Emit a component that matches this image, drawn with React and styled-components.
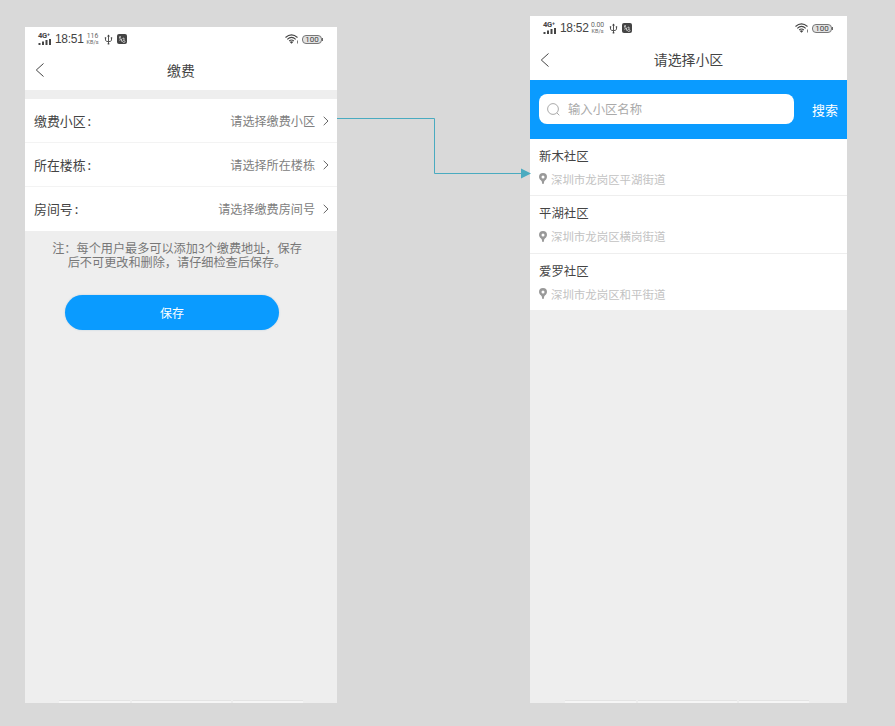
import React from "react";
import styled, { createGlobalStyle } from "styled-components";

const GlobalStyle = createGlobalStyle`
  * { box-sizing: border-box; }
  body {
    margin: 0;
    background: #d9d9d9;
    font-family: "Noto Sans CJK SC", sans-serif;
    font-weight: 400;
    overflow: hidden;
  }
  button, input { font-family: inherit; font-weight: inherit; }
`;

const Board = styled.main`
  position: relative;
  display: flex;
  align-items: flex-end;
  gap: 193px;
  width: 895px;
  height: 726px;
  padding: 0 0 23px 25px;
`;

const Phone = styled.section`
  display: flex;
  flex-direction: column;
  width: ${(p) => p.$width}px;
  height: ${(p) => p.$height}px;
  background: #eee;
`;

const StatusRow = styled.div`
  display: flex;
  align-items: center;
  height: 25px;
  padding: 0 15px 1px 13px;
  background: #fff;
  color: #444;
`;

const Network = styled.div`
  display: flex;
  flex-direction: column;
  width: 14px;
  font: 700 7.5px/6px "Roboto", sans-serif;
  letter-spacing: -0.2px;
  svg { display: block; }
`;

const Clock = styled.span`
  width: 30px;
  margin-left: 3px;
  font: 400 12px/14px "Liberation Sans", sans-serif;
  letter-spacing: -0.3px;
  white-space: nowrap;
`;

const Speed = styled.span`
  display: flex;
  flex-direction: column;
  align-items: center;
  width: 13px;
  margin-left: 1px;
  color: #666;
  font: 400 6.8px/6px "Roboto", sans-serif;
  white-space: nowrap;
`;

const SpeedUnit = styled.span`
  font-size: 5.5px;
`;

const UsbIcon = styled.svg`
  margin-left: 5px;
`;

const AppBadge = styled.svg`
  margin-left: 4px;
`;

const WifiIcon = styled.svg`
  margin-left: auto;
`;

const Battery = styled.span`
  position: relative;
  width: 20px;
  height: 9px;
  margin-left: 3px;
  border: 1px solid #777;
  border-radius: 4px;
  background: #e2e2e2;
  font: 400 8px/7px "Roboto", sans-serif;
  text-align: center;
  &::after {
    content: "";
    position: absolute;
    right: -2px;
    top: 2px;
    width: 1px;
    height: 3px;
    background: #666;
  }
`;

const TitleBar = styled.header`
  display: grid;
  grid-template-columns: 30px 1fr 30px;
  align-items: center;
  height: ${(p) => p.$height}px;
  padding-bottom: 2px;
  background: #fff;
`;

const BackIcon = styled.svg`
  margin-left: 10px;
`;

const Title = styled.h1`
  margin: -1px 0 0;
  color: #444;
  font-size: 13.9px;
  font-weight: 400;
  line-height: 20px;
  text-align: center;
`;

const FieldList = styled.div`
  margin-top: 9px;
  height: 132px;
  background: #fff;
`;

const Field = styled.div`
  display: flex;
  align-items: center;
  height: 44px;
  padding: 0 8px 0 9px;
  border-bottom: 1px solid #f3f3f3;
  &:last-child { border-bottom: 0; padding-bottom: 1px; }
`;

const Label = styled.span`
  color: #444;
  font-size: 12.9px;
`;

const Colon = styled.span`
  margin-left: 2px;
`;

const Value = styled.span`
  margin-left: auto;
  color: #808080;
  font-size: 12.1px;
`;

const Chevron = styled.svg`
  margin-left: 8px;
`;

const Note = styled.p`
  display: flex;
  flex-direction: column;
  align-items: center;
  margin: 10px 0 0;
  padding-right: 8px;
  color: #777;
  font-size: 12.15px;
  line-height: 14px;
  white-space: nowrap;
`;

const SaveButton = styled.button`
  width: 214px;
  height: 35px;
  margin: 26px 0 0 40px;
  padding: 0;
  border: 0;
  border-radius: 18px;
  background: #0a9bff;
  box-shadow: 0 0 2px #b8cede;
  color: #fff;
  font-size: 12px;
  line-height: 35px;
`;

const SearchBar = styled.div`
  display: flex;
  align-items: center;
  height: 58.5px;
  padding: 0 9px;
  background: #0a9bff;
`;

const SearchBox = styled.div`
  display: flex;
  align-items: center;
  gap: 8px;
  width: 255px;
  height: 30px;
  padding-left: 8px;
  border-radius: 8px;
  background: #fff;
  color: #aaa;
  font-size: 12.35px;
`;

const SearchAction = styled.span`
  margin-left: auto;
  color: #fff;
  font-size: 13px;
`;

const Community = styled.article`
  display: flex;
  flex-direction: column;
  height: 57.5px;
  padding: 8px 9px 0;
  border-bottom: 1px solid #eee;
  background: #fff;
`;

const CommunityName = styled.span`
  color: #444;
  font-size: 12.4px;
  line-height: 18px;
`;

const Address = styled.span`
  display: flex;
  align-items: center;
  gap: 4px;
  margin-top: 5px;
  color: #c2c2c2;
  font-size: 11.45px;
  line-height: 18px;
`;

const TabEdge = styled.div`
  display: grid;
  grid-template-columns: 71px 99px 70px;
  gap: 2px;
  width: 244px;
  height: 3px;
  margin: auto 0 0 ${(p) => p.$offset}px;
`;

const TabSegment = styled.span`
  border-top: 1px solid #e4e4e4;
  border-bottom: 2px solid #f6f6f6;
`;

const Connector = styled.svg`
  position: absolute;
  left: 337px;
  top: 110px;
`;

function StatusBar({ time, speed }) {
  return (
    <StatusRow>
      <Network>
        4G⁺
        <svg width="14" height="6" viewBox="0 0 14 6" fill="#444">
          <rect x="0.5" y="4" width="2" height="2" />
          <rect x="4" y="2.5" width="2" height="3.5" />
          <rect x="7.5" y="1" width="2" height="5" />
          <rect x="11" y="0" width="2" height="6" />
        </svg>
      </Network>
      <Clock>{time}</Clock>
      <Speed>
        <span>{speed}</span>
        <SpeedUnit>KB/s</SpeedUnit>
      </Speed>
      <UsbIcon width="9" height="11" viewBox="0 0 9 11" fill="none" stroke="#555">
        <path d="M4.5 1v9M1.5 4v2.2q0 1.3 3 1.5q3-.2 3-1.5V4" />
        <path d="M3 2.5 4.5.5 6 2.5zM3.7 9h1.6v1.5H3.7zM.8 3.3h1.4v1.2H.8zM6.8 3.3h1.4v1.2H6.8z" fill="#444" stroke="none" />
      </UsbIcon>
      <AppBadge width="10" height="10" viewBox="0 0 10 10" fill="none">
        <rect width="10" height="10" rx="2" fill="#444" />
        <path d="M3 2v3.5M2 3.5l2-.7M2.5 6.5l2-1.5v2.5M5.5 4.5 7 4v2M5.5 7.5c0-1.5 2.5-1.5 2.5 0s-2.5 1-2.5 0" stroke="#ddd" strokeWidth=".8" />
      </AppBadge>
      <WifiIcon width="14" height="10" viewBox="0 0 14 10" fill="none" stroke="#444" strokeWidth="1.1">
        <path d="M.5 3.5Q6.5-1.8 12.5 3.5M2.3 5.3Q6.5 1.5 10.7 5.3M4.2 7Q6.5 5 8.8 7" />
        <path d="M4.8 8Q6.5 6.7 8.2 8L6.5 9.7z" fill="#444" stroke="none" />
        <path d="M12.5 6.5v3" strokeWidth=".7" />
      </WifiIcon>
      <Battery>100</Battery>
    </StatusRow>
  );
}

function PageTitle({ children, height }) {
  return (
    <TitleBar $height={height}>
      <BackIcon width="10" height="14" viewBox="0 0 10 14" fill="none" stroke="#444" strokeWidth="1">
        <path d="M8.5.5 1.3 7l7.2 6.5" />
      </BackIcon>
      <Title>{children}</Title>
    </TitleBar>
  );
}

function BottomTabs({ offset }) {
  return (
    <TabEdge $offset={offset}>
      <TabSegment /><TabSegment /><TabSegment />
    </TabEdge>
  );
}

const fields = [
  ["缴费小区", "请选择缴费小区"],
  ["所在楼栋", "请选择所在楼栋"],
  ["房间号", "请选择缴费房间号"],
];

const communities = [
  ["新木社区", "深圳市龙岗区平湖街道"],
  ["平湖社区", "深圳市龙岗区横岗街道"],
  ["爱罗社区", "深圳市龙岗区和平街道"],
];

export default function App() {
  return (
    <>
      <GlobalStyle />
      <Board>
        <Phone $width={312} $height={676}>
          <StatusBar time="18:51" speed="116" />
          <PageTitle height={38}>缴费</PageTitle>
          <FieldList>
            {fields.map(([label, value]) => (
              <Field key={label}>
                <Label>{label}<Colon>:</Colon></Label>
                <Value>{value}</Value>
                <Chevron width="6" height="10" viewBox="0 0 6 10" fill="none" stroke="#666">
                  <path d="M.7.8 5 5 .7 9.2" />
                </Chevron>
              </Field>
            ))}
          </FieldList>
          <Note>
            <span>注：每个用户最多可以添加3个缴费地址，保存</span>
            <span>后不可更改和删除，请仔细检查后保存。</span>
          </Note>
          <SaveButton>保存</SaveButton>
          <BottomTabs offset={34} />
        </Phone>
        <Phone $width={317} $height={687}>
          <StatusBar time="18:52" speed="0.00" />
          <PageTitle height={39}>请选择小区</PageTitle>
          <SearchBar>
            <SearchBox>
              <svg width="13" height="13" viewBox="0 0 13 13" fill="none" stroke="#aaa">
                <circle cx="6" cy="6" r="5.4" />
                <path d="m9.8 9.8 2.5 2.5" />
              </svg>
              输入小区名称
            </SearchBox>
            <SearchAction>搜索</SearchAction>
          </SearchBar>
          {communities.map(([name, address]) => (
            <Community key={name}>
              <CommunityName>{name}</CommunityName>
              <Address>
                <svg width="8" height="11" viewBox="0 0 8 11" fill="#999">
                  <path fillRule="evenodd" d="M4 0a4 4 0 0 1 4 4c0 2-1.7 3-2.7 4.2L4.6 11H3.4L2.7 8.2C1.7 7 0 6 0 4a4 4 0 0 1 4-4m0 2.5a1.5 1.5 0 1 0 0 3a1.5 1.5 0 0 0 0-3" />
                </svg>
                {address}
              </Address>
            </Community>
          ))}
          <BottomTabs offset={35} />
        </Phone>
        <Connector width="195" height="70" viewBox="0 0 195 70" fill="none">
          <path d="M0 8.5h97.5v55H187" stroke="#4aabc0" />
          <path d="M184 58.5 194 63.5 184 68.5z" fill="#4aabc0" />
        </Connector>
      </Board>
    </>
  );
}
